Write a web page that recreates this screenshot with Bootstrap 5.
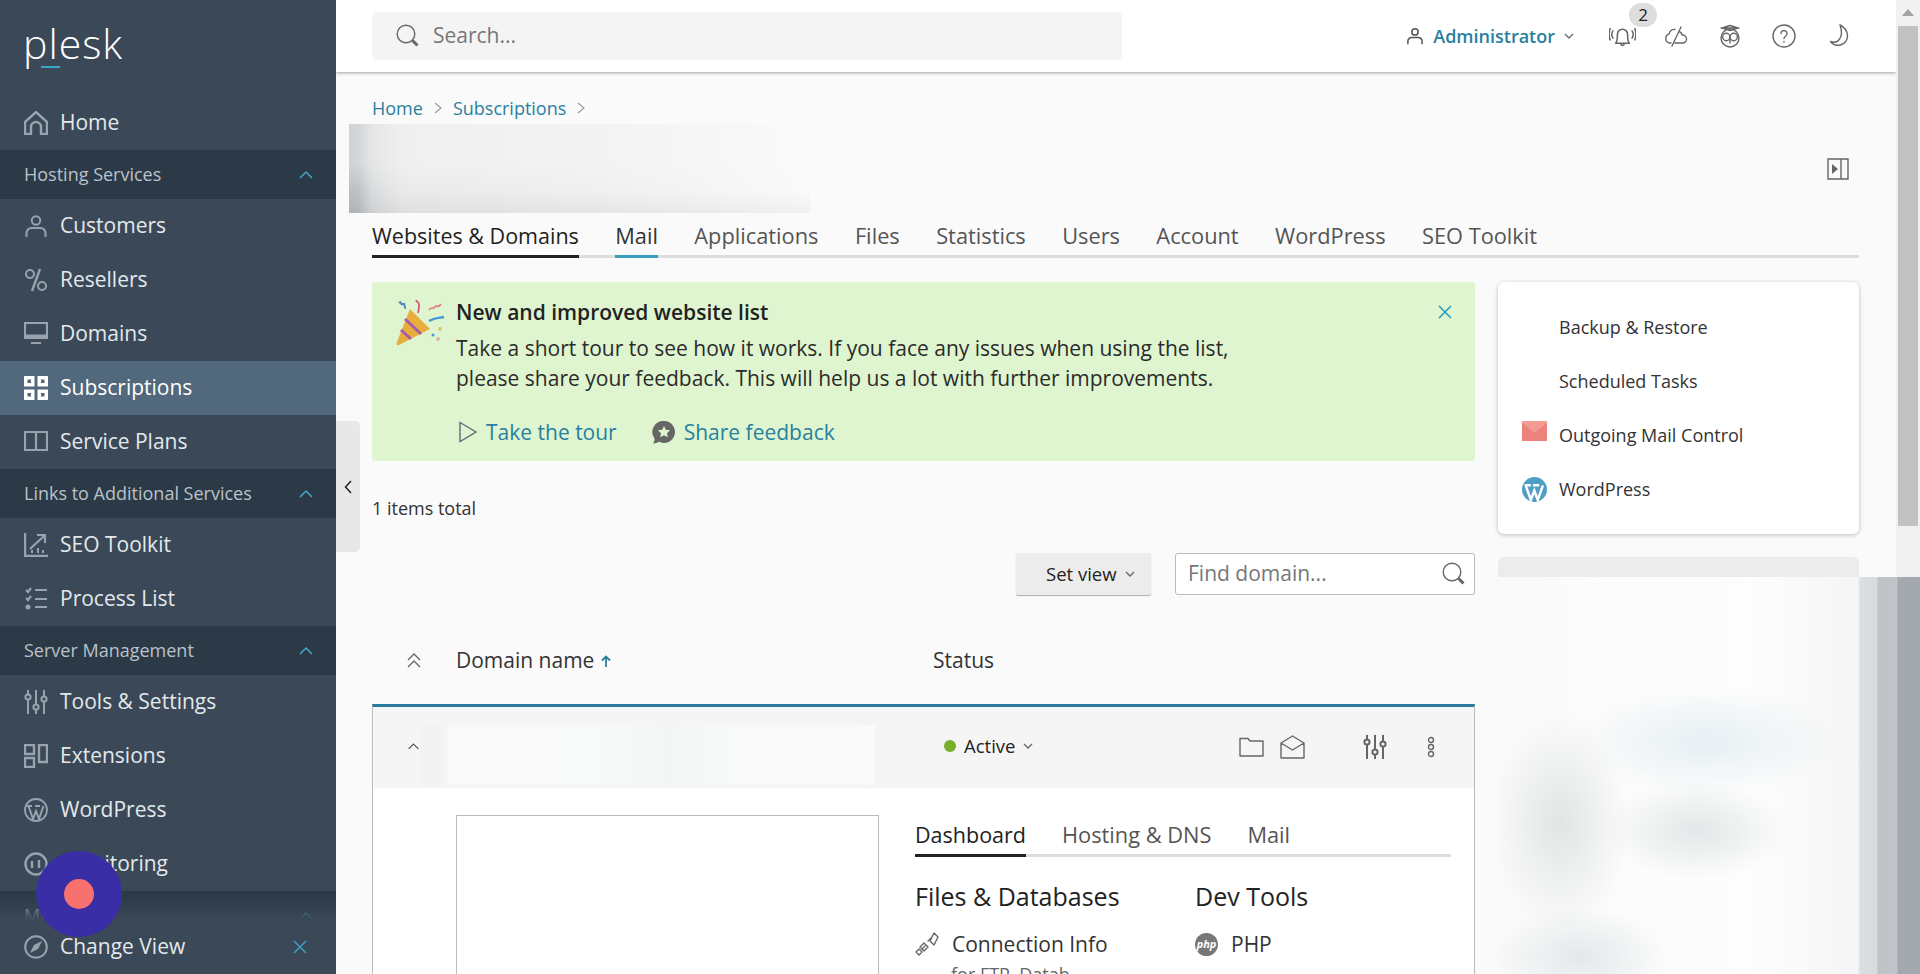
<!DOCTYPE html>
<html lang="en">
<head>
    <meta charset="UTF-8">
    <meta name="viewport" content="width=device-width, initial-scale=1.0">
    <title>Subscriptions - Plesk</title>
    <link href="https://cdn.jsdelivr.net/npm/bootstrap@5.3.0/dist/css/bootstrap.min.css" rel="stylesheet">
    <style>
        html, body { height: 100%; overflow: hidden; }
        body { font-family: "Open Sans", "Liberation Sans", sans-serif; font-size: 18px; color: #333; background: #fafafa; }
        a { text-decoration: none; color: #28809f; }
        svg { flex: none; display: block; }
        .ic { fill: none; stroke: currentColor; stroke-width: 1.4; stroke-linecap: round; stroke-linejoin: round; }

        /* sidebar */
        .side { width: 336px; height: 974px; background: #3a4858; color: #e3e8ec; }
        .side-scroll { flex: 1 1 auto; min-height: 0; overflow: hidden; }
        .brand { height: 96px; padding: 12px 0 0 23px; position: relative; font-size: 41px; font-weight: 300; line-height: 62px; color: #fff; letter-spacing: 1px; }
        .brand::after { content: ""; position: absolute; left: 41px; top: 66px; width: 19px; height: 2px; background: #3ba4c9; }
        .side-item { height: 54px; padding-left: 24px; gap: 12px; font-size: 21px; color: #e3e8ec; }
        .side-item svg { color: #98a3ae; }
        .side-item.on { background: #52687c; color: #fff; }
        .side-item.on svg { color: #fff; }
        .side-band { height: 49px; padding: 0 22px 0 24px; background: #2c3947; font-size: 18px; color: #b9c2ca; }
        .side-band svg { color: #45a6cc; }
        .side-foot { height: 82px; margin-top: -28px; padding: 26px 29px 0 24px; gap: 12px; font-size: 21px; position: relative;
            background: linear-gradient(to bottom, rgba(58,72,88,0) 0, #3a4858 28px); }
        .side-foot svg { color: #98a3ae; }
        .side-foot .foot-x { color: #3f9fc6; }
        .rec-fab { position: absolute; left: 36px; top: 851px; width: 86px; height: 86px; border-radius: 50%; background: #3a2ea6; z-index: 5; }
        .rec-fab span { width: 30px; height: 30px; border-radius: 50%; background: #f8716f; }
        .side-toggle { position: absolute; left: 336px; top: 421px; width: 24px; height: 131px; background: #e8e8e8; border-radius: 0 5px 5px 0; z-index: 3; color: #222; }

        /* header */
        .topbar { height: 72px; padding: 0 46px 0 36px; background: #fff; box-shadow: 0 1px 3px rgba(0,0,0,.35); position: relative; z-index: 2; }
        .top-search { width: 750px; height: 48px; padding-left: 24px; gap: 13px; background: #f4f4f4; border-radius: 5px; color: #777; font-size: 21px; }
        .top-user { gap: 9px; font-size: 18px; font-weight: 600; color: #28809f; }
        .top-icons { gap: 30px; margin-left: 36px; color: #666; }
        .count-pill { position: absolute; left: 19px; top: -20px; width: 28px; height: 24px; border-radius: 12px; background: #ddd; color: #222; font-size: 17px; line-height: 24px; text-align: center; }
        .fake-scroll { width: 24px; background: #f1f1f1; }
        .fake-scroll i { display: block; width: 20px; height: 500px; margin: 0 2px; background: #c1c1c1; }
        .fake-scroll b { display: block; height: 26px; padding-top: 9px; }

        /* page */
        .page { padding: 24px 37px 0 36px; }
        .crumbs { height: 24px; gap: 11px; font-size: 18px; line-height: 24px; color: #999; }
        .title-row { height: 89px; margin: 4px 0 0 -23px; }
        .title-blur { width: 461px; height: 89px;
            background: linear-gradient(to right, rgba(250,250,250,0) 0, rgba(250,250,250,.2) 8%, rgba(250,250,250,.55) 55%, #fafafa 100%),
                linear-gradient(to right, #b5babd 0, #b5babd 2%, #d0d3d5 5%, #e2e3e4 12%, #dedfdf 100%);
            position: relative; }
        .title-blur::after { content: ""; position: absolute; inset: 0; background: linear-gradient(to bottom, rgba(250,250,250,.4) 0, rgba(250,250,250,.4) 45%, rgba(250,250,250,.08) 75%, rgba(0,0,0,.04) 100%); }
        .tabbar { gap: 36px; border-bottom: 3px solid #ddd; font-size: 21.800px; font-weight: 500; line-height: 27px; color: #555; }
        .tabbar span { padding-bottom: 6px; margin-bottom: -3px; border-bottom: 3px solid transparent; }
        .tabbar .sel { color: #222; border-bottom-color: #222; font-size: 21.500px; }
        .tabbar .hov { color: #333; border-bottom-color: #3ba0bf; }
        .top-tabs { height: 45px; padding-top: 9px; gap: 36.400px; }
        .columns { gap: 23px; margin-top: 24px; }
        .col-left { width: 1103px; flex: none; }
        .col-right { width: 361px; flex: none; }

        .promo { height: 179px; padding: 16px 24px 0 20px; background: #dff5cf; border-radius: 3px; color: #2b2b2b; font-size: 21px; line-height: 30px; position: relative; }
        .promo h6 { font-size: 21px; font-weight: 600; line-height: 28px; margin: 0 0 7px; color: #222; }
        .promo-links { gap: 35px; margin-top: 24px; padding-left: 2px; }
        .promo-links a { gap: 8px; }
        .promo-x { position: absolute; right: 23px; top: 23px; color: #1f9cc0; }
        .total { margin-top: 35px; line-height: 24px; font-size: 18px; }
        .tools { margin-top: 33px; gap: 24px; }
        .view-btn { width: 135px; height: 42px; padding-left: 30px; gap: 8px; background: #ececec; box-shadow: 0 1px 1px rgba(0,0,0,.3); border-radius: 2px; color: #222; font-size: 18.500px; }
        .find-box { width: 300px; height: 42px; padding: 0 8px 0 12px; background: #fff; border: 1px solid #bbb; border-radius: 3px; font-size: 21px; color: #777; }
        .list-head { height: 109px; padding-top: 23px; font-size: 21px; color: #333; }
        .list-head .c1 { width: 84px; padding-left: 35px; color: #666; }
        .list-head .c2 { width: 477px; gap: 7px; }
        .dom-card { border-top: 3px solid #28799b; border-left: 1px solid #bbb; border-right: 1px solid #bbb; height: 500px; background: #fff; }
        .dom-row { height: 81px; background: #f5f5f5; }
        .dom-chev { width: 47px; padding-left: 34px; margin-top: -2px; color: #555; }
        .dom-blur { width: 455px; height: 60px; margin-top: 15px; margin-right: 69px;
            background: linear-gradient(to right, #f1f2f2 0, #f1f2f2 4.500%, #f5f5f5 4.600%, #f5f5f5 6%, #f9f9f9 6.100%, #f8f9f9 40%, #f3f5f6 55%, #f8f9f9 68%, #fafafa 100%); }
        .dom-state { gap: 8px; margin-top: -3px; font-size: 18.500px; font-weight: 500; color: #222; }
        .dom-state em { width: 12px; height: 12px; border-radius: 50%; background: #7aae2a; }
        .dom-acts { color: #666; margin: -2px 0 0 auto; padding-right: 39px; }
        .shot { width: 423px; height: 300px; margin: 27px 36px 0 83px; border: 1px solid #bbb; background: #fff; }
        .dash { width: 536px; margin-top: 33px; }
        .dash h5 { font-size: 25px; font-weight: 500; line-height: 32px; margin: 0; color: #222; }
        .dash-cols { margin-top: 23px; }
        .dash-cols > div { width: 280px; flex: none; }
        .tool-line { gap: 13px; margin-top: 18px; font-size: 21px; line-height: 28px; color: #333; }
        .tool-sub { margin: 3px 0 0 36px; font-size: 18px; color: #666; }

        /* sidebar widgets */
        .quick-card { padding: 18px 0; background: #fff; border-radius: 6px; box-shadow: 0 1px 4px rgba(0,0,0,.25); }
        .quick-card div { height: 54px; padding-left: 24px; gap: 12px; font-size: 18px; color: #333; }
        .quick-card i { width: 25px; height: 25px; flex: none; }
        .next-card { height: 60px; margin-top: 23px; background: #ececec; border-radius: 6px 6px 0 0; }
        .mosaic { position: absolute; left: 1497px; top: 577px; width: 423px; height: 397px; z-index: 1;
            background:
                linear-gradient(to right, rgba(0,0,0,0) 361px, #dcdee1 363px, #d8dbde 380px, #bfc3c8 381px, #c0c4c9 400px, #a4a9b0 401px),
                radial-gradient(ellipse 130px 55px at 210px 165px, #e6eff3 0, rgba(230,239,243,0) 100%),
                radial-gradient(ellipse 70px 110px at 63px 246px, #e2e5e5 0, rgba(226,229,229,0) 100%),
                radial-gradient(ellipse 90px 50px at 200px 253px, #e3e7e7 0, rgba(227,231,231,0) 100%),
                radial-gradient(ellipse 90px 50px at 83px 380px, #e3e8ea 0, rgba(227,232,234,0) 100%),
                linear-gradient(to right, #fafafa 0, #fdfdfd 60%, #f2f3f4 92%, #e9eaec 100%); }
    </style>
</head>
<body>
<svg width="0" height="0" class="position-absolute">
    <symbol id="i-home" viewBox="0 0 24 24"><path d="M1 23V11L12 1l11 10v12h-6v-7a5 5 0 0 0-10 0v7z" fill="none" stroke="currentColor" stroke-width="2.400"/></symbol>
    <symbol id="i-user" viewBox="0 0 24 24"><circle cx="12" cy="6.500" r="4.200" fill="none" stroke="currentColor" stroke-width="2"/><path d="M2.500 23v-4a5 5 0 0 1 5-5h9a5 5 0 0 1 5 5v4" fill="none" stroke="currentColor" stroke-width="2"/></symbol>
    <symbol id="i-pct" viewBox="0 0 24 24"><circle cx="6" cy="6" r="4" fill="none" stroke="currentColor" stroke-width="2"/><circle cx="18" cy="18" r="4" fill="none" stroke="currentColor" stroke-width="2"/><path d="M16 1 8 23" stroke="currentColor" stroke-width="2.400"/></symbol>
    <symbol id="i-mon" viewBox="0 0 24 24"><path d="M1 1h22v15H1zM7 21h10" fill="none" stroke="currentColor" stroke-width="2.200"/><path d="M1 14h22" stroke="currentColor" stroke-width="3"/></symbol>
    <symbol id="i-grid" viewBox="0 0 24 24"><path d="M0 0h10.500v10.500H0zM3.500 3.500v3.500H7V3.500zM13.500 0H24v10.500H13.500zM17 3.500v3.500h3.500V3.500zM0 13.500h10.500V24H0zM3.500 17v3.500H7V17zM13.500 13.500H24V24H13.500zM17 17v3.500h3.500V17z" fill="currentColor" fill-rule="evenodd"/></symbol>
    <symbol id="i-book" viewBox="0 0 24 24"><path d="M1 2h10c.6 0 1 .4 1 1v18c0-.6-.4-1-1-1H1zM23 2H13c-.6 0-1 .4-1 1v18c0-.6.4-1 1-1h10z" fill="none" stroke="currentColor" stroke-width="2.200"/></symbol>
    <symbol id="i-seo" viewBox="0 0 24 24"><path d="M1 0v23h23" fill="none" stroke="currentColor" stroke-width="2.400"/><path d="M6 16 20 3M13 2h8v8" fill="none" stroke="currentColor" stroke-width="2.200"/><path d="M8 20v-3M14 20v-5M19 20v-3" stroke="currentColor" stroke-width="2"/></symbol>
    <symbol id="i-list" viewBox="0 0 24 24"><path d="M2 3l2 2 3-4M2 11l2 2 3-4M11 3h12M11 12h12M11 20h12" fill="none" stroke="currentColor" stroke-width="2.200"/><circle cx="4" cy="20" r="2.500" fill="currentColor"/></symbol>
    <symbol id="i-sliders" viewBox="0 0 24 24"><g fill="none" stroke="currentColor" stroke-width="2"><circle cx="4" cy="7" r="2.600"/><circle cx="12" cy="17" r="2.600"/><circle cx="20" cy="9" r="2.600"/><path d="M4 0v4.400M4 9.600V24M12 0v14.400M12 19.600V24M20 0v6.400M20 11.600V24"/></g></symbol>
    <symbol id="i-ext" viewBox="0 0 24 24"><path d="M1 1h9v9H1zM1 14h9v9H1zM15 1h8v17h-8z" fill="none" stroke="currentColor" stroke-width="2.400"/></symbol>
    <symbol id="i-wp" viewBox="0 0 24 24"><circle cx="12" cy="12" r="11" fill="none" stroke="currentColor" stroke-width="1.800"/><path d="M4.500 8l4.500 13 3-8 3 8 4.500-13M3 8h5M11 8h5" fill="none" stroke="currentColor" stroke-width="2"/></symbol>
    <symbol id="i-gauge" viewBox="0 0 24 24"><circle cx="12" cy="12" r="10.500" fill="none" stroke="currentColor" stroke-width="2.400"/><path d="M8 9v7M15 8v8" stroke="currentColor" stroke-width="2.400"/></symbol>
    <symbol id="i-compass" viewBox="0 0 24 24"><circle cx="12" cy="12" r="10.800" fill="none" stroke="currentColor" stroke-width="2"/><path d="M18 6l-8 4-4 8 8-4z" fill="currentColor"/></symbol>
    <symbol id="i-up" viewBox="0 0 16 10"><path d="M2 8l6-6 6 6" fill="none" stroke="currentColor" stroke-width="1.500"/></symbol>
    <symbol id="i-down" viewBox="0 0 10 6"><path d="M1 1l4 4 4-4" fill="none" stroke="currentColor" stroke-width="1.300"/></symbol>
    <symbol id="i-x" viewBox="0 0 14 14"><path d="M1 1l12 12M13 1 1 13" fill="none" stroke="currentColor" stroke-width="1.500"/></symbol>
    <symbol id="i-lens" viewBox="0 0 24 24"><circle cx="10" cy="10" r="8.800" fill="none" stroke="currentColor" stroke-width="1.400"/><path d="M16.500 16.500l5 5" stroke="currentColor" stroke-width="3"/></symbol>
</svg>

<div class="d-flex position-relative" style="height:974px">
    <!-- left nav -->
    <div class="side d-flex flex-column flex-none">
        <div class="side-scroll">
            <div class="brand">plesk</div>
            <div class="side-item d-flex align-items-center"><svg width="24" height="24"><use href="#i-home"/></svg>Home</div>
            <div class="side-band d-flex align-items-center justify-content-between">Hosting Services<svg width="16" height="10"><use href="#i-up"/></svg></div>
            <div class="side-item d-flex align-items-center"><svg width="24" height="24"><use href="#i-user"/></svg>Customers</div>
            <div class="side-item d-flex align-items-center"><svg width="24" height="24"><use href="#i-pct"/></svg>Resellers</div>
            <div class="side-item d-flex align-items-center"><svg width="24" height="24"><use href="#i-mon"/></svg>Domains</div>
            <div class="side-item on d-flex align-items-center"><svg width="24" height="24"><use href="#i-grid"/></svg>Subscriptions</div>
            <div class="side-item d-flex align-items-center"><svg width="24" height="24"><use href="#i-book"/></svg>Service Plans</div>
            <div class="side-band d-flex align-items-center justify-content-between">Links to Additional Services<svg width="16" height="10"><use href="#i-up"/></svg></div>
            <div class="side-item d-flex align-items-center"><svg width="24" height="24"><use href="#i-seo"/></svg>SEO Toolkit</div>
            <div class="side-item d-flex align-items-center"><svg width="24" height="24"><use href="#i-list"/></svg>Process List</div>
            <div class="side-band d-flex align-items-center justify-content-between">Server Management<svg width="16" height="10"><use href="#i-up"/></svg></div>
            <div class="side-item d-flex align-items-center"><svg width="24" height="24"><use href="#i-sliders"/></svg>Tools &amp; Settings</div>
            <div class="side-item d-flex align-items-center"><svg width="24" height="24"><use href="#i-ext"/></svg>Extensions</div>
            <div class="side-item d-flex align-items-center"><svg width="24" height="24"><use href="#i-wp"/></svg>WordPress</div>
            <div class="side-item d-flex align-items-center"><svg width="24" height="24"><use href="#i-gauge"/></svg>Monitoring</div>
            <div class="side-band d-flex align-items-center justify-content-between">Mail<svg width="16" height="10"><use href="#i-up"/></svg></div>
        </div>
        <div class="side-foot d-flex align-items-center"><svg width="24" height="24"><use href="#i-compass"/></svg>Change View<svg class="foot-x ms-auto" width="14" height="14"><use href="#i-x"/></svg></div>
    </div>
    <div class="rec-fab d-flex align-items-center justify-content-center"><span></span></div>
    <div class="side-toggle d-flex align-items-center justify-content-center"><svg width="9" height="14" viewBox="0 0 9 14"><path d="M7 1 1.500 7 7 13" fill="none" stroke="currentColor" stroke-width="1.500"/></svg></div>

    <!-- main -->
    <div class="flex-grow-1 overflow-hidden" style="height:974px">
        <div class="topbar d-flex align-items-center justify-content-between">
            <div class="top-search d-flex align-items-center"><svg width="24" height="24" style="color:#666"><use href="#i-lens"/></svg>Search...</div>
            <div class="d-flex align-items-center">
                <div class="top-user d-flex align-items-center">
                    <svg width="18" height="20" viewBox="0 0 24 26" style="color:#555"><use href="#i-user"/></svg>
                    <span>Administrator</span>
                    <svg width="10" height="6" class="ms-0" style="color:#666"><use href="#i-down"/></svg>
                </div>
                <div class="top-icons d-flex align-items-center">
                    <div class="position-relative">
                        <svg width="27" height="27" viewBox="0 0 24 24" class="ic" style="margin:0 -2px 0 -1px"><path d="M6 18c1.500-2 1.500-4 1.500-8a4.500 4.500 0 0 1 9 0c0 4 0 6 1.500 8zM10.500 18.500c0 2 3 2 3 0M3.500 7c-1.500 2-1.500 4 0 6.500M20.500 7c1.500 2 1.500 4 0 6.500M1 5c-1.300 3-1.300 6 0 10M23 5c1.300 3 1.300 6 0 10"/></svg>
                        <div class="count-pill">2</div>
                    </div>
                    <svg width="24" height="24" viewBox="0 0 24 24" class="ic"><path d="M7 19H6a4.500 4.500 0 0 1-1-8.800C5.500 7 8 5 11 5.500M16 8c2 1 2 2.500 2 3a4 4 0 0 1 1 8h-8M17 3 8 22"/></svg>
                    <svg width="24" height="24" viewBox="0 0 24 24" class="ic"><path d="M3 4h18M12 1.500 4 4l8 2.500L20 4z"/><circle cx="12" cy="14" r="9"/><circle cx="8.300" cy="13" r="3.700"/><circle cx="15.700" cy="13" r="3.700"/><path d="M12 15v4"/></svg>
                    <svg width="24" height="24" viewBox="0 0 24 24" class="ic"><circle cx="12" cy="12" r="11"/><path d="M9 9.500a3 3 0 1 1 4.700 2.500c-1 .6-1.700 1.200-1.700 2.500M12 17.500v.5"/></svg>
                    <svg width="24" height="24" viewBox="0 0 24 24" class="ic"><path d="M14 1c4 2 7.500 6 7.500 11a9.500 9.500 0 0 1-17 5.500c7 3 14-4 9.500-16.500z"/></svg>
                </div>
            </div>
        </div>

        <div class="page">
            <div class="crumbs d-flex align-items-center">
                <a href="#">Home</a>
                <svg width="8" height="12" viewBox="0 0 8 12"><path d="M1 1l6 5-6 5" fill="none" stroke="currentColor" stroke-width="1.100"/></svg>
                <a href="#">Subscriptions</a>
                <svg width="8" height="12" viewBox="0 0 8 12"><path d="M1 1l6 5-6 5" fill="none" stroke="currentColor" stroke-width="1.100"/></svg>
            </div>
            <div class="title-row d-flex align-items-center justify-content-between">
                <div class="title-blur"></div>
                <svg width="22" height="22" viewBox="0 0 22 22" style="margin-right:10px;color:#666"><path d="M1 1h20v20H1zM14 1v20" fill="none" stroke="currentColor" stroke-width="1.400"/><path d="M5 6l6 5-6 5z" fill="currentColor"/></svg>
            </div>
            <div class="tabbar top-tabs d-flex">
                <span class="sel">Websites &amp; Domains</span>
                <span class="hov">Mail</span>
                <span>Applications</span>
                <span>Files</span>
                <span>Statistics</span>
                <span>Users</span>
                <span>Account</span>
                <span>WordPress</span>
                <span>SEO Toolkit</span>
            </div>

            <div class="columns d-flex">
                <div class="col-left">
                    <div class="promo d-flex">
                        <svg width="50" height="50" viewBox="0 0 50 50" style="margin:0 10px 0 4px">
                            <path d="M14 11 34 31 3 47C1 48 0 46 1 44z" fill="#e8ae3b"/>
                            <path d="M9 21 25 36M5 32l10 9" stroke="#a85ca8" stroke-width="3" fill="none"/>
                            <path d="M33 23c5-3 10-3 15-4" stroke="#3f9ad6" stroke-width="2.500" fill="none"/>
                            <path d="M3 5c3-3 1 3 4 1s0 4 3 4" stroke="#4a7fc0" stroke-width="1.800" fill="none"/>
                            <path d="M20 2c1 3 3 1 3 5 0 2 0 5-1 8" stroke="#d05a7a" stroke-width="1.800" fill="none"/>
                            <path d="M33 12c2-4 4 0 6-3s3 2 6-3" stroke="#dd8a8a" stroke-width="1.800" fill="none"/>
                            <circle cx="44" cy="31" r="2" fill="#d9c77a"/><circle cx="42" cy="41" r="2" fill="#d9b9a0"/><circle cx="37" cy="37" r="1.500" fill="#4a9ad0"/>
                        </svg>
                        <div>
                            <h6>New and improved website list</h6>
                            <div>Take a short tour to see how it works. If you face any issues when using the list,<br>please share your feedback. This will help us a lot with further improvements.</div>
                            <div class="promo-links d-flex">
                                <a href="#" class="d-flex align-items-center"><svg width="20" height="22" viewBox="0 0 20 22"><path d="M2 1.500 18 11 2 20.500z" fill="none" stroke="#667" stroke-width="1.400"/></svg>Take the tour</a>
                                <a href="#" class="d-flex align-items-center"><svg width="24" height="24" viewBox="0 0 24 24"><path d="M12 1a11 11 0 1 1-5 20.800C5 23 3 23.500 1 23.500c1-1 1.500-3 1.500-5A11 11 0 0 1 12 1z" fill="#666"/><path d="M12 6l1.800 3.800 4.200.5-3 2.900.8 4.100L12 15.300l-3.800 2 .8-4.100-3-2.900 4.200-.5z" fill="#dff5cf"/></svg>Share feedback</a>
                            </div>
                        </div>
                        <svg class="promo-x" width="14" height="14"><use href="#i-x"/></svg>
                    </div>
                    <div class="total">1 items total</div>
                    <div class="tools d-flex justify-content-end">
                        <div class="view-btn d-flex align-items-center">Set view<svg width="10" height="6" style="color:#666"><use href="#i-down"/></svg></div>
                        <div class="find-box d-flex align-items-center justify-content-between">Find domain...<svg width="24" height="24" style="color:#666"><use href="#i-lens"/></svg></div>
                    </div>
                    <div class="list-head d-flex align-items-center">
                        <div class="c1"><svg width="14" height="16" viewBox="0 0 14 16"><path d="M1 7l6-6 6 6M1 14l6-6 6 6" fill="none" stroke="currentColor" stroke-width="1.300"/></svg></div>
                        <div class="c2 d-flex align-items-center">Domain name<svg width="10" height="13" viewBox="0 0 10 13"><path d="M5 12V2M1 5.500 5 1.500l4 4" fill="none" stroke="#28809f" stroke-width="1.800"/></svg></div>
                        <div>Status</div>
                    </div>
                    <div class="dom-card">
                        <div class="dom-row d-flex align-items-center">
                            <div class="dom-chev"><svg width="13" height="9" viewBox="0 0 16 10"><use href="#i-up"/></svg></div>
                            <div class="dom-blur"></div>
                            <div class="dom-state d-flex align-items-center"><em class="d-block"></em><span>Active</span><svg width="10" height="6" style="color:#666"><use href="#i-down"/></svg></div>
                            <div class="dom-acts d-flex align-items-center">
                                <svg width="25" height="20" viewBox="0 0 25 20" class="ic me-3"><path d="M1 19V1.500h8l2 2.500h13v15z"/></svg>
                                <svg width="25" height="24" viewBox="0 0 25 24" class="ic" style="margin-right:58px"><path d="M1 8 12.500 1 24 8v15H1zM1 8l11.500 7L24 8"/></svg>
                                <svg width="24" height="24" style="color:#666;margin-right:40px"><use href="#i-sliders"/></svg>
                                <svg width="8" height="22" viewBox="0 0 8 22" class="ic"><circle cx="4" cy="4" r="2.500"/><circle cx="4" cy="11" r="2.500"/><circle cx="4" cy="18" r="2.500"/></svg>
                            </div>
                        </div>
                        <div class="d-flex align-items-start">
                            <div class="shot"></div>
                            <div class="dash">
                                <div class="tabbar d-flex">
                                    <span class="sel">Dashboard</span>
                                    <span>Hosting &amp; DNS</span>
                                    <span>Mail</span>
                                </div>
                                <div class="dash-cols d-flex">
                                    <div>
                                        <h5>Files &amp; Databases</h5>
                                        <div class="tool-line d-flex align-items-center">
                                            <svg width="24" height="24" viewBox="0 0 24 24" class="ic" style="color:#666"><path d="M1 20l3-3 3 3-3 3zM5 15l4-4 4 4-4 4zM15 9l4-8 4 4-4 8z"/><path d="M7 17l3-3M13 9l3-3"/></svg>
                                            Connection Info
                                        </div>
                                        <div class="tool-sub">for FTP, Datab</div>
                                    </div>
                                    <div>
                                        <h5>Dev Tools</h5>
                                        <div class="tool-line d-flex align-items-center">
                                            <svg width="23" height="23" viewBox="0 0 23 23"><circle cx="11.500" cy="11.500" r="11.500" fill="#777"/><text x="11.500" y="15" font-size="11" font-weight="700" font-style="italic" fill="#fff" text-anchor="middle">php</text></svg>
                                            PHP
                                        </div>
                                    </div>
                                </div>
                            </div>
                        </div>
                    </div>
                </div>
                <div class="col-right">
                    <div class="quick-card">
                        <div class="d-flex align-items-center"><i></i>Backup &amp; Restore</div>
                        <div class="d-flex align-items-center"><i></i>Scheduled Tasks</div>
                        <div class="d-flex align-items-center"><svg width="25" height="20" viewBox="0 0 25 20" style="margin-top:-8px"><rect width="25" height="20" rx="1" fill="#f29a94"/><path d="M0 2l12.500 10L25 2v18H0z" fill="#ec827b"/></svg>Outgoing Mail Control</div>
                        <div class="d-flex align-items-center"><svg width="25" height="25" viewBox="0 0 24 24"><circle cx="12" cy="12" r="12" fill="#4f9fc4"/><path d="M3.500 8 8.500 22l3.300-9 3.300 9 5-14M2.500 8h6M10.500 8h6" fill="none" stroke="#fff" stroke-width="2.400"/></svg>WordPress</div>
                    </div>
                    <div class="next-card"></div>
                </div>
            </div>
        </div>
    </div>

    <div class="fake-scroll flex-none">
        <b><svg class="mx-auto" width="12" height="7" viewBox="0 0 12 7"><path d="M0 7 6 0l6 7z" fill="#a3a3a3"/></svg></b>
        <i></i>
    </div>
    <div class="mosaic"></div>
</div>
<script src="https://cdn.jsdelivr.net/npm/bootstrap@5.3.0/dist/js/bootstrap.bundle.min.js"></script>
</body>
</html>
